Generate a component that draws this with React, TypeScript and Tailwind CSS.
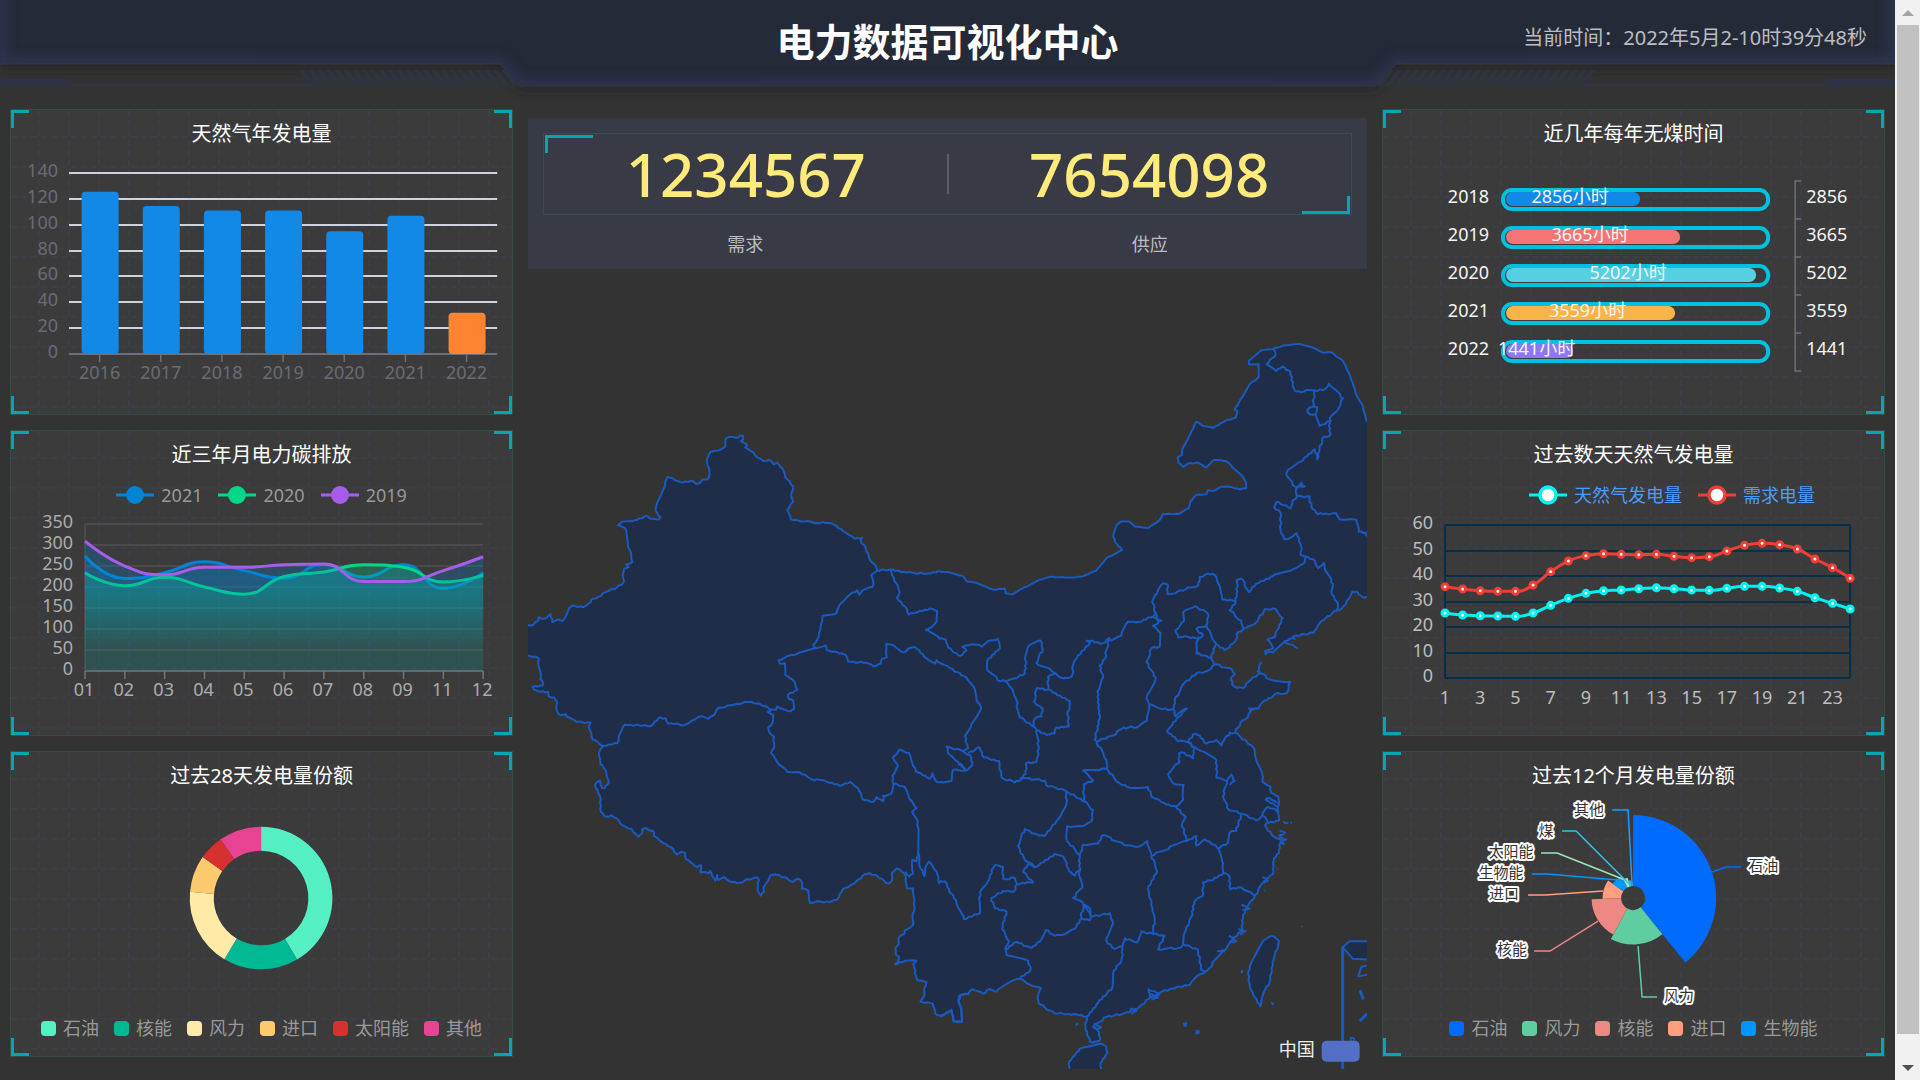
import type { ReactNode } from "react";

type Pt = [number, number];

/* ---------- helpers ---------- */

const clamp = (v: number, a: number, b: number) =>
  Math.min(Math.max(v, Math.min(a, b)), Math.max(a, b));

/** Smooth curve through the points; control points never leave their segment. */
function smooth(pts: Pt[], k = 0.5): string {
  let d = `M${pts[0][0]} ${pts[0][1]}`;
  let c1: Pt = pts[0];
  for (let i = 1; i < pts.length; i++) {
    const prev = pts[i - 1];
    const cur = pts[i];
    const next = pts[i + 1];
    let c2: Pt = cur;
    let after: Pt = cur;
    if (next) {
      const v: Pt = [next[0] - prev[0], next[1] - prev[1]];
      const lp = Math.hypot(cur[0] - prev[0], cur[1] - prev[1]);
      const ln = Math.hypot(next[0] - cur[0], next[1] - cur[1]);
      const r = ln / (ln + lp);
      const ax = clamp(cur[0] + v[0] * k * r, cur[0], next[0]);
      const ay = clamp(cur[1] + v[1] * k * r, cur[1], next[1]);
      const bx = clamp(cur[0] - ((ax - cur[0]) * lp) / ln, prev[0], cur[0]);
      const by = clamp(cur[1] - ((ay - cur[1]) * lp) / ln, prev[1], cur[1]);
      c2 = [bx, by];
      after = [cur[0] + ((cur[0] - bx) * ln) / lp, cur[1] + ((cur[1] - by) * ln) / lp];
    }
    d += `C${c1[0]} ${c1[1]} ${c2[0]} ${c2[1]} ${cur[0]} ${cur[1]}`;
    c1 = after;
  }
  return d;
}

function sector(cx: number, cy: number, r0: number, r1: number, a0: number, a1: number): string {
  const p = (r: number, a: number) => {
    const t = (a * Math.PI) / 180;
    return `${(cx + r * Math.sin(t)).toFixed(2)} ${(cy - r * Math.cos(t)).toFixed(2)}`;
  };
  const big = a1 - a0 > 180 ? 1 : 0;
  return `M${p(r1, a0)}A${r1} ${r1} 0 ${big} 1 ${p(r1, a1)}L${p(r0, a1)}A${r0} ${r0} 0 ${big} 0 ${p(r0, a0)}Z`;
}

/* ---------- shared parts ---------- */

function Corners() {
  return (
    <div aria-hidden="true">
      <i className="absolute left-0 top-0 size-[18px] border-l-[3px] border-t-[3px] border-[#02a6b5]" />
      <i className="absolute right-0 top-0 size-[18px] border-r-[3px] border-t-[3px] border-[#02a6b5]" />
      <i className="absolute bottom-0 left-0 size-[18px] border-b-[3px] border-l-[3px] border-[#02a6b5]" />
      <i className="absolute bottom-0 right-0 size-[18px] border-b-[3px] border-r-[3px] border-[#02a6b5]" />
    </div>
  );
}

function Panel({ id, title, children }: { id: string; title: string; children: ReactNode }) {
  return (
    <section
      aria-labelledby={`${id}-title`}
      className="relative border border-[#364c46] bg-[#3b3b3b] pb-[2px]"
    >
      <svg aria-hidden="true" className="absolute inset-0 size-full">
        <defs>
          <pattern id={`${id}-grid`} width="30" height="30" patternUnits="userSpaceOnUse">
            <path d="M28 0V30M0 27H30" stroke="#404250" strokeWidth="1" strokeDasharray="6 4" fill="none" />
          </pattern>
        </defs>
        <rect width="100%" height="100%" fill={`url(#${id}-grid)`} />
      </svg>
      <Corners />
      <div className="relative">
        <h2 id={`${id}-title`} className="flex h-12 items-center justify-center text-[20px] text-white">
          {title}
        </h2>
        {children}
      </div>
    </section>
  );
}

function SquareLegend({ items }: { items: { name: string; color: string }[] }) {
  return (
    <ul className="mb-[10px] flex h-8 items-center justify-center gap-[15px] text-[18px] text-[#999999]">
      {items.map((it) => (
        <li key={it.name} className="flex items-center gap-[7px] whitespace-nowrap">
          <span className="size-[15px] rounded-[4px]" style={{ backgroundColor: it.color }} />
          {it.name}
        </li>
      ))}
    </ul>
  );
}

function LineLegend({
  items,
  hollow,
  className,
}: {
  items: { name: string; color: string }[];
  hollow?: boolean;
  className: string;
}) {
  return (
    <ul className={`flex h-8 items-center gap-4 text-[18px] ${className}`}>
      {items.map((it) => (
        <li key={it.name} className="flex items-center gap-[7px] whitespace-nowrap leading-7">
          <svg width="38" height="20" viewBox="0 0 38 20" aria-hidden="true">
            <path d="M0 10H38" stroke={it.color} strokeWidth="3" />
            {hollow ? (
              <circle cx="19" cy="10" r="8" fill="#fff" stroke={it.color} strokeWidth="3.5" />
            ) : (
              <circle cx="19" cy="10" r="9" fill={it.color} />
            )}
          </svg>
          {it.name}
        </li>
      ))}
    </ul>
  );
}

/* ---------- header ---------- */

const HEADER_SHAPE = "M0 -20H1895V64H1396L1375 86H520L500 64H0Z";

function HeaderWing() {
  const bars = Array.from({ length: 24 }, (_, i) => i);
  return (
    <g>
      <g clipPath="url(#hatch)">
        {bars.map((i) => (
          <path key={i} d={`M${301 + i * 8.8} 69L${314 + i * 8.8} 87`} stroke="#2c3443" strokeWidth="4" />
        ))}
      </g>
      <path d="M0 85H312" stroke="#2f3449" strokeWidth="2" />
      <path d="M0 79H66L70 86H0Z" fill="#2d3247" />
    </g>
  );
}

function Header() {
  return (
    <header className="relative mb-[23px] h-[86px]">
      <svg
        aria-hidden="true"
        viewBox="0 0 1895 109"
        preserveAspectRatio="none"
        className="absolute left-0 top-0 h-[109px] w-full"
      >
        <defs>
          <filter id="soft" x="-5%" y="-50%" width="110%" height="200%">
            <feGaussianBlur stdDeviation="6" />
          </filter>
          <clipPath id="head">
            <path d={HEADER_SHAPE} />
          </clipPath>
          <clipPath id="hatch">
            <path d="M298 70H504L520 86H298Z" />
          </clipPath>
        </defs>
        <path d={HEADER_SHAPE} transform="translate(0 4)" fill="#1f1f1f" opacity="0.6" filter="url(#soft)" />
        <HeaderWing />
        <g transform="translate(1895 0) scale(-1 1)">
          <HeaderWing />
        </g>
        <path d={HEADER_SHAPE} fill="#252a38" />
        <g clipPath="url(#head)">
          <path d={HEADER_SHAPE} fill="none" stroke="#31375a" strokeWidth="14" opacity="0.65" filter="url(#soft)" />
        </g>
        <path d="M1895 64H1396L1375 86H520L500 64H0" fill="none" stroke="#363848" strokeWidth="1" />
      </svg>
      <div className="relative grid h-[83px] grid-cols-[1fr_auto_1fr] items-center">
        <h1 className="col-start-2 text-[38px] font-bold text-white">电力数据可视化中心</h1>
        <time className="mb-[7px] justify-self-end pr-7 text-[20px] text-[#bcbdc2]">
          当前时间：2022年5月2-10时39分48秒
        </time>
      </div>
    </header>
  );
}

/* ---------- charts ---------- */

const BARS = [
  { year: "2016", v: 125.5 },
  { year: "2017", v: 114.5 },
  { year: "2018", v: 111 },
  { year: "2019", v: 111 },
  { year: "2020", v: 95 },
  { year: "2021", v: 107 },
  { year: "2022", v: 32 },
];

function GasBars() {
  const x0 = 58;
  const x1 = 486;
  const base = 196;
  const unit = 181 / 140;
  const step = (x1 - x0) / BARS.length;
  return (
    <svg
      viewBox="0 0 501 254"
      className="block w-full overflow-visible"
      role="img"
      aria-labelledby="gas-title"
      fontSize="18"
    >
      {[0, 20, 40, 60, 80, 100, 120, 140].map((t) => {
        const y = Math.round(base - t * unit);
        return (
          <g key={t}>
            {t > 0 && <path d={`M${x0} ${y}H${x1}`} stroke="#cdd2dc" strokeWidth="2" />}
            <text x="47" y={y + 4} textAnchor="end" fill="#6a6a75">
              {t}
            </text>
          </g>
        );
      })}
      <path d={`M${x0} ${base}H${x1}`} stroke="#6e7079" strokeWidth="2" />
      {BARS.map((b, i) => {
        const cx = x0 + step * (i + 0.5);
        return (
          <g key={b.year}>
            <path d={`M${cx} ${base}v8`} stroke="#6e7079" strokeWidth="1.5" />
            <rect
              x={cx - 18}
              y={base - b.v * unit}
              width="37"
              height={b.v * unit}
              rx="4"
              fill={b.year === "2022" ? "#ff8432" : "#1389e7"}
            />
            <text x={cx} y={base + 25} textAnchor="middle" fill="#6a6a75">
              {b.year}
            </text>
          </g>
        );
      })}
    </svg>
  );
}

const MONTHS = ["01", "02", "03", "04", "05", "06", "07", "08", "09", "11", "12"];
const CARBON = [
  {
    name: "2021",
    color: "#0184d5",
    fill: ["#0184d5", 0.25, 0.05],
    v: [274, 220, 234, 260, 239, 221, 254, 224, 253, 197, 234],
  },
  {
    name: "2020",
    color: "#00d887",
    fill: ["#00d887", 0.26, 0.1],
    v: [234, 203, 223, 200, 183, 225, 236, 253, 247, 212, 228],
  },
  {
    name: "2019",
    color: "#a65eea",
    fill: ["#0184d5", 0.25, 0.05],
    v: [309, 250, 229, 247, 247, 253, 255, 213, 213, 239, 272],
  },
] as const;

function CarbonLines() {
  const x0 = 74;
  const x1 = 472;
  const base = 160;
  const unit = 147 / 350;
  const step = (x1 - x0) / 10;
  return (
    <>
      <LineLegend items={CARBON.map((c) => ({ name: c.name, color: c.color }))} className="justify-center text-[#999999]" />
      <svg
        viewBox="0 0 501 222"
        className="block w-full overflow-visible"
        role="img"
        aria-labelledby="carbon-title"
        fontSize="18"
      >
        <defs>
          {CARBON.map((c) => (
            <linearGradient key={c.name} id={`area-${c.name}`} x1="0" y1="0" x2="0" y2="1">
              <stop offset="0" stopColor={c.fill[0]} stopOpacity={c.fill[1]} />
              <stop offset="0.3" stopColor={c.fill[0]} stopOpacity={c.fill[1]} />
              <stop offset="0.8" stopColor={c.fill[0]} stopOpacity={c.fill[2]} />
            </linearGradient>
          ))}
        </defs>
        {[0, 50, 100, 150, 200, 250, 300, 350].map((t) => {
          const y = Math.round(base - t * unit);
          return (
            <g key={t}>
              <path d={`M${x0} ${y}H${x1}`} stroke={t ? "#505050" : "#777777"} strokeWidth="1.5" />
              <text x="62" y={y + 4} textAnchor="end" fill="#acacac">
                {t}
              </text>
            </g>
          );
        })}
        <path d={`M${x0} 13V${base}`} stroke="#505050" strokeWidth="1.5" />
        {MONTHS.map((m, i) => (
          <g key={m}>
            <path d={`M${x0 + i * step} ${base}v8`} stroke="#777777" strokeWidth="1.5" />
            <text x={x0 + i * step - 1} y={base + 25} textAnchor="middle" fill="#acacac">
              {m}
            </text>
          </g>
        ))}
        {CARBON.map((c) => {
          const d = smooth(c.v.map((v, i): Pt => [x0 + i * step, base - v * unit]));
          return (
            <g key={c.name}>
              <path d={`${d}L${x1} ${base}H${x0}Z`} fill={`url(#area-${c.name})`} />
              <path d={d} fill="none" stroke={c.color} strokeWidth="3" />
            </g>
          );
        })}
      </svg>
    </>
  );
}

const SHARES = [
  { name: "石油", color: "#55efc4", from: 0, to: 149.7 },
  { name: "核能", color: "#00b894", from: 149.7, to: 211 },
  { name: "风力", color: "#ffeaa7", from: 211, to: 275 },
  { name: "进口", color: "#fdcb6e", from: 275, to: 305 },
  { name: "太阳能", color: "#d63031", from: 305, to: 325.5 },
  { name: "其他", color: "#e84393", from: 325.5, to: 360 },
];

function ShareRing() {
  return (
    <>
      <svg viewBox="0 0 501 212" className="block w-full" role="img" aria-labelledby="ring-title">
        {SHARES.map((s) => (
          <path key={s.name} d={sector(250, 98, 47.3, 71.3, s.from, s.to)} fill={s.color} />
        ))}
      </svg>
      <SquareLegend items={SHARES} />
    </>
  );
}

const HOURS = [
  { year: "2018", v: 2856, w: 134, color: "#1089e7" },
  { year: "2019", v: 3665, w: 174, color: "#f57474" },
  { year: "2020", v: 5202, w: 250, color: "#56d0e3" },
  { year: "2021", v: 3559, w: 169, color: "#f8b448" },
  { year: "2022", v: 1441, w: 67, color: "#8b78f6" },
];

function CoalFreeHours() {
  return (
    <svg
      viewBox="0 0 501 254"
      className="block w-full overflow-visible"
      role="img"
      aria-labelledby="coal-title"
      fontSize="18"
      fill="#f4f4f4"
    >
      {HOURS.map((h, i) => {
        const y = 41 + i * 38;
        return (
          <g key={h.year}>
            <rect x="120" y={y - 9} width="265" height="19" rx="9" fill="none" stroke="#00c1de" strokeWidth="4" />
            <rect x="123" y={y - 7} width={h.w} height="14" rx="7" fill={h.color} />
            <text x="106" y={y + 4} textAnchor="end">
              {h.year}
            </text>
            <text x={120 + h.w / 2} y={y + 4} textAnchor="middle">
              {h.v}小时
            </text>
            <text x="423" y={y + 4}>
              {h.v}
            </text>
          </g>
        );
      })}
      <path
        d="M418 23H412V213H418M412 61H418M412 99H418M412 137H418M412 175H418"
        fill="none"
        stroke="#6e7079"
        strokeWidth="1.5"
      />
    </svg>
  );
}

const DEMAND = [500, 507, 512, 514, 514, 495, 455, 423, 407, 401, 403, 404, 403, 409, 413, 410, 393, 376, 370, 374, 387, 417, 443, 475];
const GAS = [579, 585, 587, 588, 589, 579, 556, 535, 520, 512, 510, 506, 503, 506, 510, 511, 505, 499, 499, 504, 514, 533, 550, 567];

function DailyLines() {
  const x0 = 62;
  const x1 = 467;
  const step = (x1 - x0) / 23;
  const series = [
    { name: "天然气发电量", color: "#00f2f1", raw: GAS },
    { name: "需求电量", color: "#ed3f35", raw: DEMAND },
  ];
  return (
    <>
      <LineLegend items={series} hollow className="justify-end pr-[69px] text-[#4c9bfd]" />
      <svg
        viewBox="0 0 501 222"
        className="block w-full overflow-visible"
        role="img"
        aria-labelledby="daily-title"
        fontSize="18"
        fill="#bdbdbd"
      >
        {[0, 1, 2, 3, 4, 5, 6].map((t) => {
          const y = Math.round(167 - t * 25.5);
          return (
            <g key={t}>
              <path d={`M${x0} ${y}H${x1}`} stroke="#06304a" strokeWidth="2" />
              <text x="50" y={y + 4} textAnchor="end">
                {t * 10}
              </text>
            </g>
          );
        })}
        <path d={`M${x0} 14V167M${x1} 14V167`} stroke="#06304a" strokeWidth="2" />
        {Array.from({ length: 12 }, (_, i) => (
          <text key={i} x={x0 + i * 2 * step} y="193" textAnchor="middle">
            {i * 2 + 1}
          </text>
        ))}
        {series.map((s) => {
          const pts = s.raw.map((v, i): Pt => [x0 + i * step, v / 3 - 91]);
          return (
            <g key={s.name}>
              <path d={smooth(pts)} fill="none" stroke={s.color} strokeWidth="3" />
              {pts.map((p) => (
                <circle key={p[0]} cx={p[0]} cy={p[1]} r="3" fill="#fff" stroke={s.color} strokeWidth="3" />
              ))}
            </g>
          );
        })}
      </svg>
    </>
  );
}

const ROSE = [
  { name: "石油", color: "#006cff", r: 83, from: 0, to: 141, line: "330,72 344,67 359,67", x: 381, y: 66 },
  { name: "风力", color: "#60cda0", r: 46.5, from: 141, to: 208.5, line: "256,146 260,197 275,197", x: 297, y: 196 },
  { name: "核能", color: "#ed8884", r: 41.5, from: 208.5, to: 268.5, line: "216,121 168,151 152,151", x: 130, y: 150 },
  { name: "进口", color: "#ff9f7f", r: 30.5, from: 268.5, to: 305, line: "221,91 163,95 146,95", x: 122, y: 94 },
  { name: "生物能", color: "#0096ff", r: 25, from: 305, to: 332, line: "236,80 165,74 150,74", x: 119, y: 73 },
  { name: "太阳能", color: "#9fe6b8", r: 21, from: 332, to: 345, line: "243,80 175,53 159,53", x: 129, y: 52 },
  { name: "煤", color: "#32c5e9", r: 18, from: 345, to: 352, line: "247,84 194,31 180,31", x: 164, y: 31 },
  { name: "其他", color: "#1d9dff", r: 15, from: 352, to: 360, line: "250,85 246,10 230,10", x: 207, y: 10 },
];

function ShareRose() {
  return (
    <>
      <svg
        viewBox="1 0 501 212"
        className="block w-full overflow-visible"
        role="img"
        aria-labelledby="rose-title"
        fontSize="15"
      >
        {ROSE.map((s) => (
          <g key={s.name}>
            <path d={sector(251, 98, 12, s.r, s.from, s.to)} fill={s.color} />
            <polyline points={s.line} fill="none" stroke={s.color} strokeWidth="1.5" />
            <text
              x={s.x}
              y={s.y + 5}
              textAnchor="middle"
              fill="#333"
              stroke="#fff"
              strokeWidth="4"
              strokeLinejoin="round"
              paintOrder="stroke"
            >
              {s.name}
            </text>
          </g>
        ))}
      </svg>
      <SquareLegend items={ROSE.slice(0, 5)} />
    </>
  );
}

/* ---------- totals ---------- */

function Totals() {
  return (
    <section aria-label="需求与供应" className="bg-[#383a46] p-[15px] pb-[9px]">
      <div className="relative grid h-[82px] grid-cols-2 items-center border border-[#32504f] text-center font-['Noto_Sans'] text-[60px] font-medium leading-none text-[#ffeb7b]">
        <i className="absolute left-[1px] top-[1px] h-[18px] w-12 border-l-[3px] border-t-[3px] border-[#02a6b5]" />
        <i className="absolute bottom-0 right-[1px] h-[18px] w-12 border-b-[3px] border-r-[3px] border-[#02a6b5]" />
        <output>1234567</output>
        <output className="relative">
          7654098
          <i className="absolute left-0 top-[10px] h-10 w-[2px] bg-[#5b5d68]" />
        </output>
      </div>
      <div className="mt-[14px] grid grid-cols-2 text-center text-[18px] leading-[31px] text-[#bdbdc3]">
        <span>需求</span>
        <span>供应</span>
      </div>
    </section>
  );
}

/* ---------- map ---------- */

const parse = (s: string): Pt[] =>
  s.trim().split(" ").map((p) => p.split(",").map(Number) as Pt);

/** Breaks long stretches into small uneven steps, the same way for the same stretch. */
function ragged(s: string, amp = 3): string {
  const pts = parse(s);
  let d = `M${pts[0][0]} ${pts[0][1]}`;
  for (let i = 1; i < pts.length; i++) {
    const [ax, ay] = pts[i - 1];
    const [bx, by] = pts[i];
    const len = Math.hypot(bx - ax, by - ay);
    const n = len > 200 ? 1 : Math.max(1, Math.round(len / 8));
    for (let j = 1; j < n; j++) {
      const h = Math.sin(ax * 12.9 + ay * 78.2 + j * 37.7) * 43758.5;
      const off = (h - Math.floor(h) - 0.5) * 2 * amp;
      const t = j / n;
      const x = ax + (bx - ax) * t - ((by - ay) / len) * off;
      const y = ay + (by - ay) * t + ((bx - ax) / len) * off;
      d += `L${x.toFixed(1)} ${y.toFixed(1)}`;
    }
    d += `L${bx} ${by}`;
  }
  return d;
}

const WEST_NORTH =
  "20,496 35,496 45,489 55,484 56,476 65,480 75,479 92,468 97,488 108,484 115,481 128,485 138,473 147,454 157,447 170,451 190,452 212,440 214,433 235,427 270,411 290,405 297,399 306,398 312,389 308,375 312,360 326,355 318,349 337,343 334,325 324,305 319,266 307,258 294,254 305,246 345,242 381,231 390,238 417,240 422,235 407,219 411,202 425,178 443,137 480,150 520,148 532,155 548,144 562,144 569,131 561,95 572,77 596,74 616,64 616,47 625,41 648,43 669,38 670,47 663,51 682,61 676,67 701,79 712,91 730,99 748,96 762,107 772,103 788,117 796,138 820,160 814,184 820,197 802,218 813,240 845,245 870,245 890,249 908,246 936,250 975,271 1005,287 1026,285 1024,297 1033,302 1050,338 1070,355 1072,364 1110,361 1160,368 1218,372 1262,365";
const WEST_SOUTH =
  "20,569 42,571 57,577 55,590 60,605 61,626 70,635 68,641 38,644 42,651 60,656 84,656 86,667 103,670 112,681 109,699 119,712 137,710 142,717 170,729 212,731 206,741 219,772 233,777 250,787 237,802 241,830 257,845 266,877 254,889 246,888 240,870 225,880 240,908 241,940 253,956 265,958 275,954 290,961 302,975 335,987 355,1006 366,999 367,987 378,985 400,992 402,1004 430,1021 460,1036 471,1049 485,1042 496,1045 498,1060 530,1079 543,1075 541,1091 566,1094 570,1088 586,1112 592,1098 595,1110 613,1103 635,1115 660,1117 675,1111 713,1104 717,1110 713,1135 723,1148 732,1138 731,1128 750,1101 762,1097 800,1105 820,1115 835,1107 847,1117 845,1131 865,1136 871,1166 895,1161 930,1164 951,1158 970,1131 1000,1120 1022,1107 1028,1100 1048,1094 1067,1098 1106,1119 1116,1112 1117,1092 1130,1082 1153,1094 1157,1100 1161,1130 1180,1131 1184,1175 1178,1200 1181,1217 1155,1232 1153,1241 1136,1250 1137,1265 1126,1275 1128,1290 1138,1296 1135,1307 1126,1314 1155,1305 1190,1305 1180,1313 1192,1352 1220,1357 1213,1372 1214,1388 1202,1404 1238,1408 1247,1434 1268,1437 1295,1423 1300,1450 1327,1453 1325,1420 1316,1403 1322,1388 1335,1388";
const WEST_INNER = [
  "1072,364 1055,374 1060,388 1058,403 1030,410 1019,422 1012,411 985,425 965,441 949,467 908,473 902,500 897,522 880,543 886,551 830,565 800,571 776,580 780,588 795,587 796,615 820,628 833,651 805,662 807,674 820,678 823,697 812,703 772,691 769,699 755,699 735,691 693,680 645,686 593,696 583,712 565,721 545,715 515,726 495,736 445,733 437,720 417,718 392,739 315,735 300,757 292,780 250,786",
  "1110,361 1140,415 1131,429 1162,457 1166,470 1185,466 1230,455 1252,462 1250,487 1236,500 1218,507 1255,523 1260,530",
  "886,551 918,544 921,556 950,560 977,567 985,583 1040,586 1062,595 1083,588 1087,576 1101,573 1099,541 1118,543 1152,561 1165,552 1185,548 1220,575 1246,588 1250,580 1262,587",
  "755,699 743,704 760,712 758,731 745,742 752,758 762,764 763,791 753,804 775,830 803,849 840,851 875,867 920,873 960,883 990,874 1015,889 1028,915 1060,922 1070,910 1090,920 1090,907 1113,903 1121,878 1118,858 1135,835 1119,814 1132,805 1138,796 1168,804 1188,848 1230,866 1238,853 1250,873 1261,875",
  "1121,878 1155,886 1169,915 1190,937 1177,945 1194,970 1196,1035 1199,1075 1214,1101 1216,1083 1228,1066 1250,1090 1258,1118 1261,1113",
  "1196,1045 1190,1065 1177,1062 1180,1095 1168,1102 1157,1090",
];

const NORTH =
  "0,725 30,728 68,738 82,755 108,758 160,780 195,776 197,790 218,794 240,780 300,750 330,741 400,743 430,739 470,722 500,685 547,660 527,637 520,620 530,587 545,574 568,575 585,590 625,595 660,570 670,552 718,552 747,535 752,515 770,495 800,493 805,481 822,483 845,470 870,471 900,478 920,475 918,455 905,435 885,418 860,393 822,390 800,413 775,398 745,401 732,411 716,398 714,383 727,375 728,358 740,335 770,275 790,288 820,294 858,272 888,263 893,243 885,240 905,205 930,162 957,142 957,103 928,103 928,92 965,61 1000,57 1035,46 1080,42 1115,51 1150,68 1175,67 1210,93 1228,130 1245,175 1250,195 1270,230 1281,275";
const NORTH_INNER = [
  "1000,57 1008,72 980,103 1010,123 1028,110 1052,125 1065,182 1085,187 1100,180 1150,181 1168,161 1210,205 1197,235 1170,265 1170,318 1153,320 1140,355 1133,388 1125,358 1085,395 1045,420 1040,435 1065,470 1095,470 1085,458 1068,480 1072,500 1058,512 1053,535 1030,525 1010,516 1003,533 1022,548 1023,600 1033,628 1050,625 1070,610 1085,650 1083,675 1099,680",
  "1125,183 1120,230 1103,240 1110,253 1128,253 1133,232 1120,230",
  "1128,253 1140,288 1170,272",
  "1072,500 1110,500 1115,530 1135,553 1190,550 1200,568 1250,570 1257,605 1278,608 1285,628",
];

const COAST =
  "1290,170 1265,163 1252,150 1238,150 1230,167 1208,197 1190,205 1145,236 1120,270 1070,278 1030,300 1005,322 977,332 977,322 1000,315 983,290 1005,283 1012,262 1029,227 1008,201 976,201 948,242 912,258 895,268 886,295 855,321 830,302 814,340 823,362 870,372 886,390 875,400 877,420 892,430 912,430 920,417 935,405 962,388 995,407 1052,412 1042,445 1015,445 968,472 957,490 935,490 925,515 908,525 886,560 940,602 950,640 968,680 968,703 992,716 995,735 1015,745 1018,815 985,822 976,831 1003,862 1022,870 1018,910 1003,925 1000,970 975,990 955,1020 940,1045 920,1070 910,1090 908,1130 880,1160 845,1200 800,1253 780,1262 750,1293 690,1305 640,1325 600,1355 570,1372 500,1386 480,1400 460,1415 478,1430 480,1455 450,1458 437,1415 440,1385 410,1378 345,1375 315,1358 296,1345 295,1325 303,1302 270,1292 240,1275 210,1285 170,1312 150,1305 130,1318 98,1305 85,1320 66,1321";
const EAST_INNER = [
  "0,285 18,290 25,313 62,337 80,322 68,311 100,303 125,310 150,292 174,288 180,315 142,352 142,378 182,411 230,402 255,388 258,335 270,305 302,292 309,318 290,358 330,375 348,388 325,398 325,435 292,430 283,470 308,490 305,513 285,520 282,543 240,515 228,460 212,428 197,410",
  "348,388 362,400 395,398 405,350 450,300 440,293 490,300 508,285 512,293",
  "325,435 390,468 384,510 388,542 350,545 345,562 320,566 290,553 282,543",
  "290,553 297,600 290,645 258,650 258,680 240,692",
  "0,358 30,372 80,400 105,435 110,465 124,487 95,535 75,570 85,605 70,614 20,600 25,620 55,645 75,670 40,668 35,700 0,703",
  "70,614 90,625 97,655 78,670 62,650 70,660",
  "85,620 120,603 132,632 178,642 185,690 225,705 250,692 315,700 320,713 380,730",
  "508,290 495,345 480,365 490,400 473,440 480,520 465,580 470,585",
  "512,293 545,278 565,238 590,240 640,222 647,212 637,180 652,155 668,127 684,130 684,158 705,156 745,138 775,133 780,108 805,98 825,102 838,130 848,173 888,178 893,150 890,118 905,112 928,152 950,127 1000,105 1060,85 1090,70 1099,48",
  "1099,48 1125,60 1136,82 1152,67 1162,95 1180,128 1175,152 1195,185 1190,205",
  "888,178 870,205 905,235 912,258",
  "640,222 665,235 640,250 662,270 660,310 635,315 620,355 648,400 620,460 628,478 622,525 590,545 552,545 520,568 470,585",
  "647,212 655,235 665,235",
  "628,478 660,490 702,492 705,465 735,415 770,388 805,380 823,362",
  "702,492 708,512 742,490 700,530 682,555 715,585 745,588 760,565 780,568 800,592 830,582 845,597 870,560 886,560",
  "768,192 730,210 733,235 708,262 715,283 745,282 775,288 790,278 770,258 800,248 805,215 768,192",
  "775,280 770,330 814,342",
  "800,248 812,270 820,290 830,302",
  "470,585 500,640 502,665 430,670 460,700 432,710 434,760",
  "502,665 530,702 570,720 625,718 635,745 665,762 708,775",
  "380,730 434,760 460,785 458,812 425,832 382,832 382,875 420,915",
  "745,588 765,605 760,635 735,620 718,620 720,645 702,660 685,680 705,710 732,712 730,755 708,775 738,805 727,825 742,875",
  "745,588 790,615 830,640 830,690 862,700 850,745 868,785 905,795",
  "862,700 875,682 885,700 870,712",
  "905,795 890,845 870,850 865,880 835,898",
  "905,795 950,815 968,800 985,822",
  "968,800 985,775 1018,790",
  "1015,775 978,755 990,750 1015,765",
  "742,875 770,860 770,888 795,870 830,890 835,898",
  "835,898 850,940 852,968 868,975 872,1015 905,1010 940,1030 950,1032",
  "852,968 820,988 790,995 788,1035 765,1050 755,1095 735,1140 730,1175",
  "420,915 430,885 475,882 490,857 560,888 600,890 622,875 635,918 720,880 742,875",
  "635,918 652,962 625,1015 638,1070 645,1100 640,1145",
  "420,915 420,980 428,1010 400,1040 430,1055 425,1100 450,1105 455,1095 430,1060 450,1070 453,1095",
  "453,1095 510,1085 520,1115 500,1165 525,1188 548,1182 555,1157 590,1170 605,1137 640,1145 675,1150 655,1190 720,1185 730,1175 775,1190 785,1250 800,1253",
  "548,1182 545,1220 520,1260 518,1300 470,1350 440,1385",
  "425,1100 405,1130 375,1145 345,1150 318,1133 305,1160 275,1185 230,1168 197,1190 200,1205 265,1222 272,1250 240,1275",
  "197,1190 208,1165 187,1130 200,1080 165,1070 155,1040 190,1020 222,1022 232,1000",
  "0,990 15,992 50,1055 72,1102 120,1085 120,1025 145,990 165,945 190,950 190,985 225,982 232,1000 280,995 250,965 265,942 290,950",
  "290,950 345,912 372,922 388,962 405,975 418,960",
  "380,730 380,765 355,812 315,860 290,855 255,840 235,890 255,930 290,950",
];
const TAIWAN =
  "998,1150 1018,1165 1002,1220 990,1285 970,1320 962,1356 930,1300 925,1255 945,1210 970,1165 998,1150";
const HAINAN = "387,1542 388,1515 420,1478 485,1464 500,1472 503,1490 482,1520 483,1542";
const ISLETS = [
  "904,1255 908,1252 905,1259", "994,1345 1000,1347 997,1351", "730,1406 740,1404 737,1413 732,1408",
  "766,1433 778,1428 770,1426 778,1434", "408,1410 413,1405 410,1409", "1087,1122 1089,1124",
  "1035,298 1060,305 1075,315", "1058,285 1068,288", "966,354 958,368 954,382 964,386",
  "1030,818 1046,822", "1020,845 1036,850 1018,862 1040,870 1022,880 1034,884 1024,868", "1052,820 1057,822",
  "968,980 985,990 972,996", "905,1060 930,1072 908,1075", "868,1150 890,1165 872,1168", "895,1130 918,1136 900,1146",
  "832,1195 856,1196", "635,1318 655,1330 638,1335 660,1320 645,1312 626,1306 630,1330", "570,1362 590,1368 575,1378",
  "462,1405 484,1415 470,1420 460,1410", "926,488 940,492 930,500", "1012,955 1014,957", "974,1018 976,1019",
];

/** WEST_SOUTH runs west to east, so it is walked backwards to close the western shape. */
const reversed = (s: string) => s.split(" ").reverse().join(" ");

function ChinaMap() {
  return (
    <svg viewBox="0 0 839 800" className="block w-full overflow-hidden" role="img" aria-label="中国地图">
      <g fill="#202d48" stroke="none">
        <path
          transform="translate(-8 151) scale(.33333 .41454)"
          d={`${ragged(WEST_NORTH, 2)}L1340 389L1350 392V1388L${reversed(WEST_SOUTH)}Z`}
        />
        <path transform="translate(412 61) scale(.33333)" d={`${ragged(NORTH, 1)}L1290 275V790H0Z`} />
        <path
          transform="translate(412 271) scale(.33333 .34439)"
          d={`${ragged(COAST)}L65 1398L42 1398L35 1366L0 1384V92L30 94L68 104L80 121L108 124L160 145L195 142L197 153L218 158L235 145L300 117L350 107L430 106L470 90L500 55L547 27L530 0H1290Z`}
        />
      </g>
      <g fill="none" stroke="#1a59bd" strokeWidth="2" strokeLinejoin="round">
        <g transform="translate(-8 151) scale(.33333 .41454)">
          <path d={ragged(WEST_NORTH, 2)} vectorEffect="non-scaling-stroke" />
          {[WEST_SOUTH, ...WEST_INNER].map((s) => (
            <path key={s} d={ragged(s, 2)} vectorEffect="non-scaling-stroke" />
          ))}
        </g>
        <g transform="translate(412 61) scale(.33333)">
          <path d={ragged(NORTH, 1)} vectorEffect="non-scaling-stroke" />
          {NORTH_INNER.map((s) => (
            <path key={s} d={ragged(s)} vectorEffect="non-scaling-stroke" />
          ))}
        </g>
        <g transform="translate(412 271) scale(.33333 .34439)">
          {[COAST, ...EAST_INNER, ...ISLETS].map((s) => (
            <path key={s} d={ragged(s)} vectorEffect="non-scaling-stroke" />
          ))}
          <path d={ragged(TAIWAN, 2)} fill="#202d48" vectorEffect="non-scaling-stroke" />
          <path d={ragged(HAINAN, 2)} fill="#202d48" vectorEffect="non-scaling-stroke" />
          <path d="M1290 1166H1230L1209 1183L1240 1217L1290 1219" fill="#202d48" vectorEffect="non-scaling-stroke" />
          <path d="M1209 1183V1542" strokeWidth="3" vectorEffect="non-scaling-stroke" />
          <path
            d="M1290 1235L1265 1240L1256 1268L1290 1262M1233 1455V1447H1243V1455"
            vectorEffect="non-scaling-stroke"
          />
          <path d="M1261 1308L1271 1335M1283 1376L1260 1398" strokeWidth="3" vectorEffect="non-scaling-stroke" />
          <path d="M65 1321L58 1325L55 1340L65 1365L66 1398L42 1398L35 1366L12 1380L0 1384" vectorEffect="non-scaling-stroke" />
        </g>
      </g>
      <text x="769" y="787" textAnchor="middle" fontSize="18" fill="#eeeeee">
        中国
      </text>
      <rect x="794" y="772" width="38" height="21" rx="5" fill="#5470c6" />
    </svg>
  );
}

/* ---------- page ---------- */

function ScrollRail() {
  return (
    <div className="flex w-[25px] shrink-0 flex-col items-center bg-[#f1f1f1]">
      <button type="button" aria-label="向上滚动" className="flex h-[25px] w-full items-center justify-center">
        <svg width="12" height="6" viewBox="0 0 12 6" aria-hidden="true">
          <path d="M6 0L12 6H0Z" fill="#a3a3a3" />
        </svg>
      </button>
      <div className="flex w-full flex-1 flex-col pl-[2px] pr-[1px]">
        <div className="h-[98%] bg-[#c1c1c1]" />
      </div>
      <button type="button" aria-label="向下滚动" className="flex h-[25px] w-full items-center justify-center">
        <svg width="12" height="6" viewBox="0 0 12 6" aria-hidden="true">
          <path d="M0 0H12L6 6Z" fill="#505050" />
        </svg>
      </button>
    </div>
  );
}

export default function App() {
  return (
    <div className="flex h-screen bg-[#333333] font-['Noto_Sans','Noto_Sans_CJK_SC',sans-serif]">
      <div className="min-w-0 flex-1 overflow-hidden">
        <Header />
        <main className="grid grid-cols-[3fr_5fr_3fr] items-start gap-[15px] px-[10px]">
          <div className="flex flex-col gap-[15px]">
            <Panel id="gas" title="天然气年发电量">
              <GasBars />
            </Panel>
            <Panel id="carbon" title="近三年月电力碳排放">
              <CarbonLines />
            </Panel>
            <Panel id="ring" title="过去28天发电量份额">
              <ShareRing />
            </Panel>
          </div>
          <div className="pt-[9px]">
            <Totals />
            <ChinaMap />
          </div>
          <div className="flex flex-col gap-[15px]">
            <Panel id="coal" title="近几年每年无煤时间">
              <CoalFreeHours />
            </Panel>
            <Panel id="daily" title="过去数天天然气发电量">
              <DailyLines />
            </Panel>
            <Panel id="rose" title="过去12个月发电量份额">
              <ShareRose />
            </Panel>
          </div>
        </main>
      </div>
      <ScrollRail />
    </div>
  );
}
